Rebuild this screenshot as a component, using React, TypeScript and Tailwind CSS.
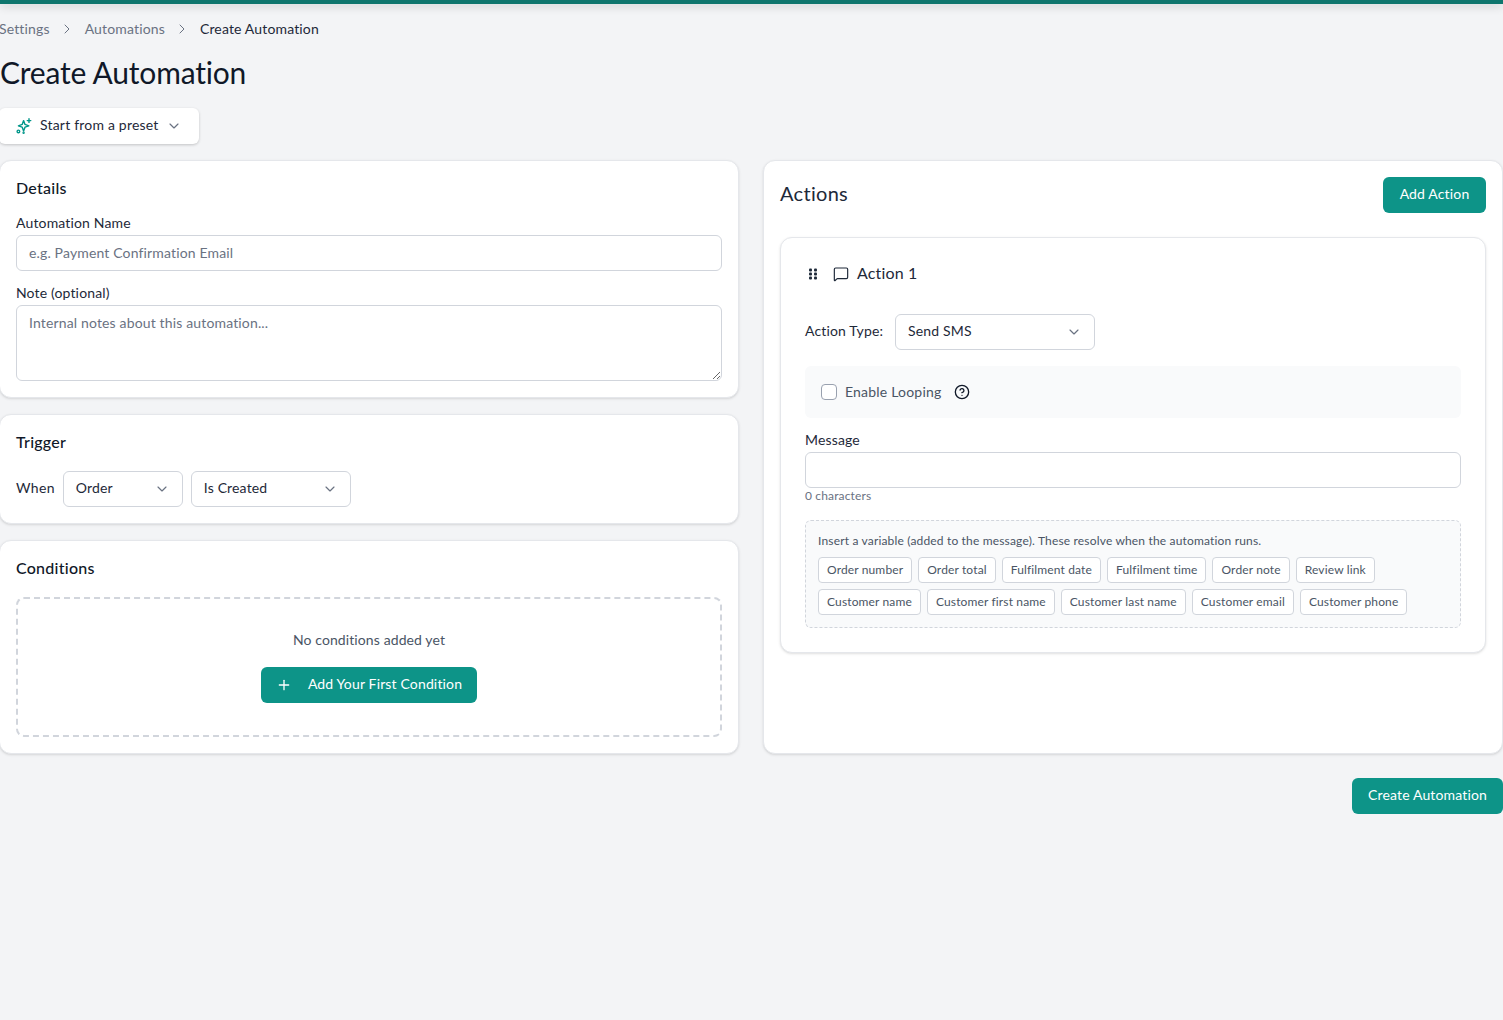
import { ChevronDown, ChevronRight, CircleHelp, MessageSquare, Plus } from 'lucide-react'

const varsA = ['Order number', 'Order total', 'Fulfilment date', 'Fulfilment time', 'Order note', 'Review link']
const varsB = ['Customer name', 'Customer first name', 'Customer last name', 'Customer email', 'Customer phone']

function Select({ label, width }: { label: string; width: string }) {
  return (
    <div className={`flex h-9 items-center justify-between rounded-md border border-gray-300 bg-white pl-3 pr-3 text-sm text-gray-800 ${width}`}>
      <span className="pb-0.5">{label}</span>
      <ChevronDown className="size-4 text-gray-500" strokeWidth={1.75} />
    </div>
  )
}

function Chip({ label }: { label: string }) {
  return (
    <span className="flex h-[26px] items-center rounded border border-gray-300 bg-white px-2 text-xs tracking-[0.14px] text-gray-600">{label}</span>
  )
}

function PresetIcon() {
  return (
    <svg viewBox="0 0 16 16" className="size-4 text-teal-600" fill="none" stroke="currentColor" strokeWidth="1.4" strokeLinejoin="round" strokeLinecap="round">
      <path d="M7.6 2.6 9 6.4 12.8 7.8 9 9.2 7.6 13 6.2 9.2 2.4 7.8 6.2 6.4Z" />
      <path d="M13 0.8v3.6M11.2 2.6h3.6" />
      <circle cx="2.4" cy="13.4" r="1.3" />
      <circle cx="7.6" cy="14.8" r="0.5" />
    </svg>
  )
}

export default function App() {
  return (
    <div className="min-h-[1020px] overflow-hidden bg-[#f3f4f6] font-['Lato','Noto_Sans',sans-serif] tracking-[0.15px] text-gray-900">
      <div className="h-1 bg-[#0f766e] shadow-[0_2px_10px_rgba(0,0,0,0.2)]" />
      <main className="-ml-px w-[1504px]">
        <nav className="mt-[15px] flex h-5 items-center text-sm text-gray-500">
          <span>Settings</span>
          <ChevronRight className="mx-[9.5px] size-4" strokeWidth={1.5} />
          <span>Automations</span>
          <ChevronRight className="mx-[9.5px] size-4" strokeWidth={1.5} />
          <span className="text-gray-800">Create Automation</span>
        </nav>

        <h1 className="mt-[15px] pl-px text-3xl leading-9 tracking-[-0.2px] text-gray-900">Create Automation</h1>

        <button className="mt-[18px] flex h-9 w-[200px] items-center gap-2 rounded-md bg-white pl-[17px] text-sm tracking-[0.2px] text-gray-800 shadow-[0_1px_3px_rgba(0,0,0,0.2)]">
          <PresetIcon />
          <span className="pb-0.5">Start from a preset</span>
          <ChevronDown className="-ml-px size-4 text-gray-500" strokeWidth={1.75} />
        </button>

        <div className="mt-4 grid grid-cols-2 gap-6">
          <div className="flex flex-col gap-4">
            <section className="rounded-xl border border-gray-200 bg-white p-4 shadow-sm">
              <h2 className="h-6 text-base leading-[22px] font-medium tracking-[0.25px]">Details</h2>
              <label className="mt-3 block text-sm text-gray-800">Automation Name</label>
              <div className="mt-0.5 flex h-9 items-center rounded-md border border-gray-300 px-3 text-sm text-gray-500">e.g. Payment Confirmation Email</div>
              <label className="mt-3 block text-sm text-gray-800">Note (optional)</label>
              <textarea
                readOnly
                placeholder="Internal notes about this automation..."
                className="mt-0.5 block h-[76px] w-full rounded-md border border-gray-300 px-3 py-[7px] text-sm placeholder:text-gray-500"
              />
            </section>

            <section className="rounded-xl border border-gray-200 bg-white p-4 shadow-sm">
              <h2 className="h-6 text-base leading-[22px] font-medium tracking-[0.25px]">Trigger</h2>
              <div className="mt-4 flex items-center gap-2">
                <span className="pb-0.5 text-sm tracking-[0.35px] text-gray-800">When</span>
                <Select label="Order" width="w-[120px]" />
                <Select label="Is Created" width="w-[160px]" />
              </div>
            </section>

            <section className="rounded-xl border border-gray-200 bg-white p-4 shadow-sm">
              <h2 className="h-6 text-base leading-[22px] font-medium tracking-[0.25px]">Conditions</h2>
              <div className="mt-4 flex h-[140px] flex-col items-center justify-center rounded-lg border-2 border-dashed border-gray-300 pb-0.5">
                <p className="text-sm tracking-[0.1px] text-gray-600">No conditions added yet</p>
                <button className="mt-[17px] flex h-9 w-[216px] items-center justify-center gap-4 rounded-md bg-[#0d9488] text-sm text-white">
                  <Plus className="size-4" strokeWidth={2} />
                  <span className="pb-0.5">Add Your First Condition</span>
                </button>
              </div>
            </section>
          </div>

          <section className="rounded-xl border border-gray-200 bg-white p-4 shadow-sm">
            <div className="flex items-center justify-between">
              <h2 className="pb-1 text-xl tracking-[0.3px] text-gray-800">Actions</h2>
              <button className="h-9 w-[103px] rounded-md bg-[#0d9488] pb-0.5 text-sm text-white">Add Action</button>
            </div>

            <div className="mt-6 rounded-xl border border-gray-200 bg-white p-6 shadow-sm">
              <div className="flex h-6 items-center">
                <svg viewBox="0 0 8 12" className="ml-1 h-3 w-2 text-gray-800" fill="currentColor">
                  <rect x="0" y="0.5" width="3" height="3" rx="1" />
                  <rect x="5" y="0.5" width="3" height="3" rx="1" />
                  <rect x="0" y="4.5" width="3" height="3" rx="1" />
                  <rect x="5" y="4.5" width="3" height="3" rx="1" />
                  <rect x="0" y="8.5" width="3" height="3" rx="1" />
                  <rect x="5" y="8.5" width="3" height="3" rx="1" />
                </svg>
                <MessageSquare className="ml-4 size-4 text-gray-800" strokeWidth={1.75} />
                <span className="ml-2 pb-0.5 text-base text-gray-800">Action 1</span>
              </div>

              <div className="mt-7 flex items-center gap-3">
                <span className="pb-0.5 text-sm text-gray-800">Action Type:</span>
                <Select label="Send SMS" width="w-[200px]" />
              </div>

              <div className="mt-4 flex items-center rounded-md bg-[#f9fafb] p-4">
                <span className="size-4 rounded border border-gray-400 bg-white" />
                <span className="ml-2 h-5 text-sm leading-[19px] tracking-[0.2px] text-gray-600">Enable Looping</span>
                <CircleHelp className="ml-[13px] size-4 text-gray-900" strokeWidth={2} />
              </div>

              <label className="mt-3 block text-sm text-gray-800">Message</label>
              <div className="mt-0.5 h-9 rounded-md border border-gray-300 bg-white" />
              <p className="text-xs leading-4 text-gray-500">0 characters</p>

              <div className="mt-4 rounded-md border border-dashed border-gray-300 bg-[#f9fafb] p-3">
                <p className="text-xs leading-4 tracking-[0.17px] text-gray-600">Insert a variable (added to the message). These resolve when the automation runs.</p>
                <div className="mt-2 flex gap-1.5">
                  {varsA.map((v) => (
                    <Chip key={v} label={v} />
                  ))}
                </div>
                <div className="mt-1.5 flex gap-1.5">
                  {varsB.map((v) => (
                    <Chip key={v} label={v} />
                  ))}
                </div>
              </div>
            </div>
          </section>
        </div>

        <div className="mt-6 flex justify-end">
          <button className="h-9 w-[151px] rounded-md bg-[#0d9488] pb-0.5 text-sm text-white">Create Automation</button>
        </div>
      </main>
    </div>
  )
}
